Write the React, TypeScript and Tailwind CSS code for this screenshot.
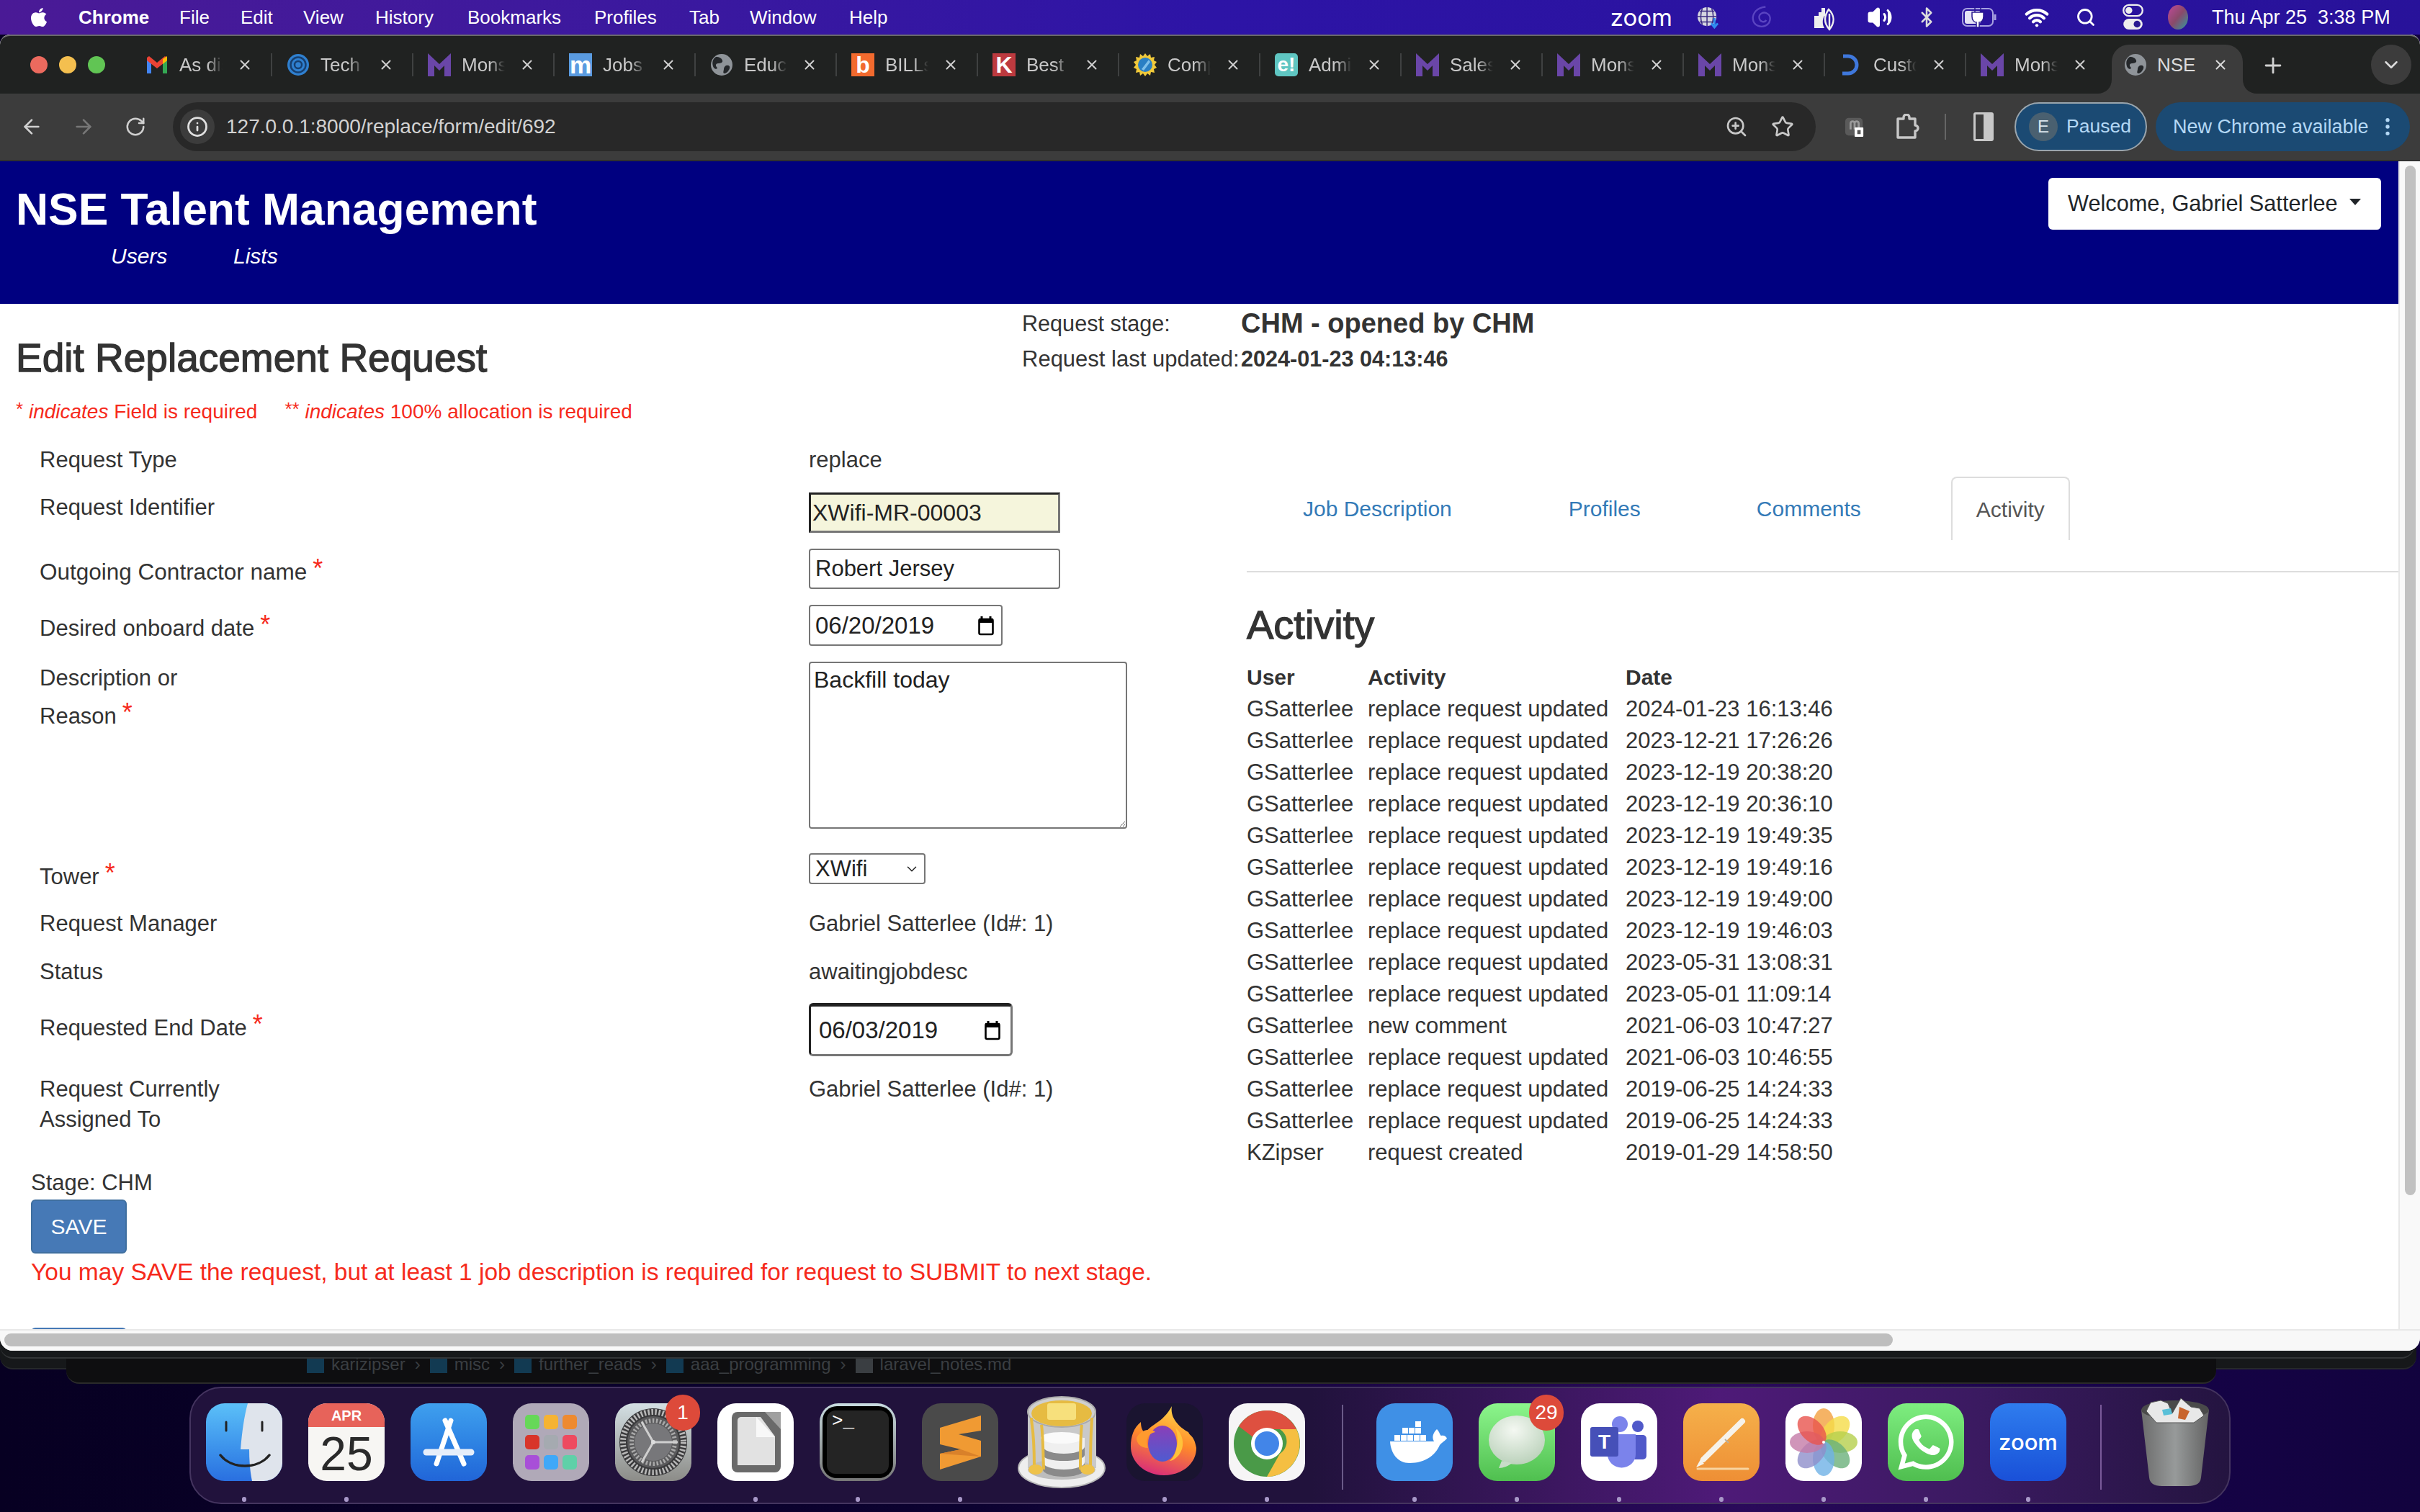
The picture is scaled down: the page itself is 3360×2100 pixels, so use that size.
import type { ReactNode } from 'react'
import { ArrowLeft, ArrowRight, Bluetooth, ChevronDown, Info, MoreVertical, Plus, RotateCw, Search, Star, Volume2, Wifi, X, ZoomIn } from 'lucide-react'
import { FaApple, FaWhatsapp } from 'react-icons/fa'

const MENU = [
  ['File', 'w-[85px]'],
  ['Edit', 'w-[87px]'],
  ['View', 'w-[100px]'],
  ['History', 'w-[128px]'],
  ['Bookmarks', 'w-[176px]'],
  ['Profiles', 'w-[132px]'],
  ['Tab', 'w-[84px]'],
  ['Window', 'w-[138px]'],
  ['Help', 'w-[80px]'],
]

function MonsterM() {
  return (
    <svg viewBox="0 0 32 32" className="h-8 w-8">
      <path d="M0 32V0l16 15L32 0v32h-9V17l-7 7-7-7v15z" fill="#6a46a8" />
    </svg>
  )
}

function GlobeIcon() {
  return (
    <svg viewBox="0 0 32 32" className="h-8 w-8">
      <circle cx="16" cy="16" r="15" fill="#8f9499" />
      <path d="M8 5c5 0 8 2 9 5s-3 4-6 4-4 3-2 5 0 4-3 2S1 9 8 5zM22 17c4-1 6 1 5 4s-4 7-7 7-1-4-1-6 1-4 3-5z" fill="#24272a" />
    </svg>
  )
}

const FAVICONS: Record<string, ReactNode> = {
  gmail: (
    <svg viewBox="0 0 32 32" className="h-8 w-8">
      <path d="M2 8v20h6V14z" fill="#4285f4" />
      <path d="M30 8v20h-6V14z" fill="#34a853" />
      <path d="M2 10V6l3-2 11 9 11-9 3 2v4l-14 11z" fill="#ea4335" />
      <path d="M24 8l6-4v6l-6 5z" fill="#fbbc04" />
    </svg>
  ),
  tech: (
    <svg viewBox="0 0 32 32" className="h-8 w-8">
      <circle cx="16" cy="16" r="15" fill="#2f80d0" />
      <circle cx="16" cy="16" r="10.5" fill="none" stroke="#163f70" strokeWidth="2.5" />
      <circle cx="16" cy="16" r="5" fill="none" stroke="#163f70" strokeWidth="2.5" />
    </svg>
  ),
  monster: <MonsterM />,
  jobs: (
    <div className="flex h-8 w-8 items-center justify-center bg-[#5a9be0] text-[34px] leading-none font-bold text-white">m</div>
  ),
  bill: (
    <div className="flex h-8 w-8 items-center justify-center bg-[#f26a2e] text-[32px] leading-none font-bold text-white">b</div>
  ),
  best: (
    <div className="flex h-8 w-8 items-center justify-center bg-[#bd3a3f] text-[32px] leading-none font-bold text-white">K</div>
  ),
  compass: (
    <svg viewBox="0 0 32 32" className="h-8 w-8">
      <path d="M16 0l3 4 4-3 1 5 5-1-1 5 4 2-3 4 3 4-4 2 1 5-5-1-1 5-4-3-3 4-3-4-4 3-1-5-5 1 1-5-4-2 3-4-3-4 4-2-1-5 5 1 1-5 4 3z" fill="#f0c93a" />
      <circle cx="16" cy="16" r="10" fill="#2a7fc4" />
      <path d="M11 22L21 9l2 3-9 12z" fill="#7fc0ea" />
    </svg>
  ),
  admin: (
    <div className="flex h-8 w-8 items-center justify-center rounded-[5px] bg-[#5fc6c2] text-[28px] leading-none font-bold text-white">e!</div>
  ),
  cust: (
    <svg viewBox="0 0 32 32" className="h-8 w-8">
      <path d="M5 4h7a12 12 0 0 1 0 24H4" fill="none" stroke="#3f78dc" strokeWidth="5" />
    </svg>
  ),
  globe: <GlobeIcon />,
}

const TABS = [
  ['gmail', 'As dis'],
  ['tech', 'Tech'],
  ['monster', 'Mons'],
  ['jobs', 'Jobs'],
  ['globe', 'Educ'],
  ['bill', 'BILLs'],
  ['best', 'Best'],
  ['compass', 'Comp'],
  ['admin', 'Admi'],
  ['monster', 'Sales'],
  ['monster', 'Mons'],
  ['monster', 'Mons'],
  ['cust', 'Custo'],
  ['monster', 'Mons'],
]

function Tab({ icon, title, first }: { icon: string; title: string; first: boolean }) {
  return (
    <div className="flex h-[68px] w-[196px] shrink-0 items-start pt-3">
      <div className={first ? 'h-8 w-[2px]' : 'h-8 w-[2px] bg-[#3f4141]'} />
      <div className="ml-5 h-8 w-8 shrink-0">{FAVICONS[icon]}</div>
      <div className="ml-[15px] w-[60px] text-[26px] leading-8 whitespace-nowrap text-[#c9c9c9] [mask-image:linear-gradient(to_right,black_65%,transparent)]">
        {title}
      </div>
      <X className="mt-[5px] ml-5 shrink-0 text-[#d0d0d0]" size={22} strokeWidth={2.2} />
    </div>
  )
}

function ActiveTab() {
  return (
    <div className="relative ml-2 flex h-[68px] w-[182px] shrink-0 items-start rounded-t-[24px] bg-[#3c3c3c] pt-3 pl-[17px]">
      <svg viewBox="0 0 20 20" className="absolute bottom-0 -left-5 h-5 w-5">
        <path d="M20 0v20H0c12 0 20-8 20-20z" fill="#3c3c3c" />
      </svg>
      <svg viewBox="0 0 20 20" className="absolute -right-5 bottom-0 h-5 w-5">
        <path d="M0 0v20h20C8 20 0 12 0 0z" fill="#3c3c3c" />
      </svg>
      <GlobeIcon />
      <div className="ml-[14px] w-[50px] text-[26px] leading-8 whitespace-nowrap text-[#dcdcdc]">NSE</div>
      <X className="mt-[5px] ml-[27px] shrink-0 text-[#d8d8d8]" size={22} strokeWidth={2.2} />
    </div>
  )
}

function MenuBar() {
  return (
    <div className="flex h-12 shrink-0 items-center bg-gradient-to-r from-[#4a1a96] via-[#2d14a6] to-[#28129a] text-[26px] text-white">
      <FaApple className="ml-[39px]" size={30} />
      <span className="ml-[40px] w-[140px] font-bold">Chrome</span>
      {MENU.map(([name, width]) => (
        <span key={name} className={width}>{name}</span>
      ))}
      <span className="ml-auto font-['Inter',sans-serif] text-[33px] leading-none">zoom</span>
      <svg viewBox="0 0 32 34" className="ml-[34px] h-[34px] w-[30px]">
        <circle cx="15" cy="16" r="14" fill="#d5d5e0" />
        <path d="M1 16h28M15 2v28M4 8h22M4 24h22M8 4c-3 8-3 16 0 24M22 4c3 8 3 16 0 24" stroke="#3a2a80" strokeWidth="1.6" fill="none" />
        <path d="M26 18v12M21 26l5 6 5-6" stroke="#2f8df0" strokeWidth="3" fill="none" />
      </svg>
      <svg viewBox="0 0 32 34" className="ml-[44px] h-[34px] w-[31px] opacity-60">
        <path d="M22 2C10 3 3 11 4 20s11 12 18 9 9-13 3-17-13 0-12 6 8 7 10 3" fill="none" stroke="#7a66d8" strokeWidth="2.4" />
      </svg>
      <svg viewBox="0 0 38 38" className="ml-[50px] h-[38px] w-[38px]">
        <path d="M8 17h6v-5h4V6h5v11h-1c-3 5-3 12 0 17H8z" fill="#eee" />
        <path d="M28 8c8 8 9 18 1 28-7-8-8-18-1-28zM29 14v20" fill="none" stroke="#eee" strokeWidth="2.4" />
      </svg>
      <Volume2 className="ml-[43px] fill-white text-white" size={36} />
      <Bluetooth className="ml-[32px] text-[#ddd]" size={30} />
      <svg viewBox="0 0 50 28" className="ml-[34px] h-[28px] w-[50px]">
        <rect x="1" y="2" width="42" height="24" rx="6" fill="none" stroke="#a8a2e0" strokeWidth="2" />
        <rect x="4" y="5" width="22" height="18" rx="3" fill="#e4e2f5" />
        <path d="M46 10v8" stroke="#a8a2e0" strokeWidth="3" />
        <path d="M18 0v7M26 0v7M14 7h16v6c0 5-3 8-6 8v7h-4v-7c-3 0-6-3-6-8z" stroke="#2a1a90" strokeWidth="1.5" fill="#fff" />
      </svg>
      <Wifi className="ml-[37px]" size={34} strokeWidth={3} />
      <Search className="ml-[37px]" size={28} strokeWidth={2.4} />
      <svg viewBox="0 0 30 40" className="ml-[37px] h-[38px] w-[29px]">
        <rect x="1" y="2" width="28" height="16" rx="8" fill="none" stroke="#eee" strokeWidth="2.5" />
        <circle cx="9" cy="10" r="5" fill="#eee" />
        <rect x="1" y="22" width="28" height="16" rx="8" fill="#eee" />
        <circle cx="21" cy="30" r="5" fill="#2a1a90" />
      </svg>
      <svg viewBox="0 0 28 36" className="ml-[34px] h-[36px] w-[28px]">
        <defs>
          <linearGradient id="siri" x1="0" x2="1" y1="0" y2="1">
            <stop offset="0" stopColor="#c04a9a" />
            <stop offset="0.5" stopColor="#8a4a6a" />
            <stop offset="1" stopColor="#2f9aa0" />
          </linearGradient>
        </defs>
        <ellipse cx="14" cy="18" rx="14" ry="17" fill="url(#siri)" />
      </svg>
      <span className="mr-[38px] ml-[33px] w-[251px] text-[27px] whitespace-nowrap">Thu Apr 25&nbsp;&nbsp;3:38 PM</span>
    </div>
  )
}

function TabStrip() {
  return (
    <div className="flex h-[82px] shrink-0 items-end rounded-t-[14px] border-t-2 border-[#6a6a6a] bg-[#202221]">
      <div className="flex h-[68px] w-[180px] shrink-0 items-start gap-4 pt-4 pl-[42px]">
        <span className="h-6 w-6 rounded-full bg-[#ec6a5e]" />
        <span className="h-6 w-6 rounded-full bg-[#f4bf4f]" />
        <span className="h-6 w-6 rounded-full bg-[#61c554]" />
      </div>
      {TABS.map(([icon, title], i) => (
        <Tab key={i} icon={icon} title={title} first={i === 0} />
      ))}
      <ActiveTab />
      <div className="flex h-[68px] items-start pt-[12px] pl-[25px]">
        <Plus className="text-[#d0d0d0]" size={34} />
      </div>
      <div className="mr-3 mb-3 ml-auto flex h-14 w-14 items-center justify-center rounded-full bg-[#3c3c3c]">
        <ChevronDown className="text-[#dcdcdc]" size={30} />
      </div>
    </div>
  )
}

function Toolbar() {
  return (
    <div className="flex h-[94px] shrink-0 items-center border-b-2 border-[#303030] bg-[#3c3c3c]">
      <ArrowLeft className="ml-[28px] text-[#d0d0d0]" size={32} />
      <ArrowRight className="ml-[40px] text-[#777]" size={32} />
      <RotateCw className="ml-[41px] text-[#d0d0d0]" size={30} />
      <div className="ml-[37px] flex h-[68px] w-[2281px] items-center rounded-full bg-[#282828] pl-[10px]">
        <div className="flex h-12 w-12 items-center justify-center rounded-full bg-[#3c3c3c]">
          <Info className="text-[#e0e0e0]" size={30} strokeWidth={2.2} />
        </div>
        <span className="ml-4 text-[28px] text-[#d2d2d2]">127.0.0.1:8000/replace/form/edit/692</span>
        <ZoomIn className="ml-auto text-[#c8c8c8]" size={32} />
        <Star className="mr-[30px] ml-[32px] text-[#c8c8c8]" size={32} />
      </div>
      <svg viewBox="0 0 30 32" className="ml-[40px] h-8 w-[28px]">
        <rect x="1" y="3" width="26" height="26" rx="5" fill="#5a5a5a" />
        <path d="M9 20V11a3 3 0 0 1 6 0v9M15 20V11a3 3 0 0 1 6 0v9" stroke="#999" strokeWidth="3" fill="none" />
        <rect x="15" y="17" width="13" height="14" rx="1" fill="#fff" />
        <rect x="19" y="21" width="5" height="6" fill="#555" />
      </svg>
      <svg viewBox="0 0 34 36" className="ml-[42px] h-9 w-[34px]">
        <path d="M4 7h8V5a4 4 0 0 1 8 0v2h8v9a4 4 0 0 1 0 8v9H4z" fill="none" stroke="#c8c8c8" strokeWidth="3.4" strokeLinejoin="round" />
      </svg>
      <div className="ml-[35px] h-9 w-[2px] bg-[#666]" />
      <div className="ml-[38px] flex h-10 w-[28px] justify-end rounded-[3px] border-[3px] border-[#c8c8c8]">
        <div className="h-full w-[11px] bg-[#c8c8c8]" />
      </div>
      <div className="ml-[29px] flex h-[68px] w-[184px] items-center rounded-full border-2 border-[#9aa5ad] bg-[#1b4a73] pl-[18px]">
        <div className="flex h-10 w-10 items-center justify-center rounded-full bg-[#4a6070] text-[24px] text-[#dbe6ee]">E</div>
        <span className="ml-[12px] text-[26.5px] text-[#b4d8f5]">Paused</span>
      </div>
      <div className="ml-[12px] flex h-[68px] w-[353px] items-center rounded-full bg-[#1b4a73] pl-6">
        <span className="text-[27px] whitespace-nowrap text-[#b4d8f5]">New Chrome available</span>
        <MoreVertical className="mr-[15px] ml-auto text-[#b4d8f5]" size={32} />
      </div>
    </div>
  )
}

function Req() {
  return <span className="ml-[8px] align-[3px] text-[36px] leading-none text-[#f62a1c]">*</span>
}

function CalendarIcon() {
  return (
    <svg viewBox="0 0 24 28" className="h-7 w-6">
      <path d="M6 1v4M18 1v4" stroke="#000" strokeWidth="3" />
      <rect x="2.5" y="5" width="19" height="21" rx="2" fill="none" stroke="#000" strokeWidth="2.6" />
      <rect x="2" y="4" width="20" height="6" fill="#000" />
    </svg>
  )
}

function Row({ className, label, labelClass, children }: { className: string; label: ReactNode; labelClass: string; children: ReactNode }) {
  return (
    <div className={`grid grid-cols-[1068px_auto] ${className}`}>
      <div className={labelClass}>{label}</div>
      <div>{children}</div>
    </div>
  )
}

function FormSection() {
  return (
    <div className="w-[1731px] shrink-0 text-[31px] leading-[42px] text-[#333]">
      <div className="pl-[55px]">
        <Row className="h-[66px]" labelClass="" label="Request Type">replace</Row>
        <Row className="h-[78px]" labelClass="" label="Request Identifier">
          <input
            readOnly
            value="XWifi-MR-00003"
            className="h-[56px] w-[349px] border-[3px] border-t-[#222] border-r-[#767676] border-b-[#767676] border-l-[#222] bg-[#f5f5dc] pl-[2px] text-[32px] text-[#222]"
          />
        </Row>
        <Row
          className="h-[78px]"
          labelClass="pt-[10px] text-[31.5px]"
          label={<>Outgoing Contractor name<Req /></>}
        >
          <input
            readOnly
            value="Robert Jersey"
            className="h-[56px] w-[349px] rounded-[4px] border-2 border-[#767676] pl-[7px] text-[31px] text-[#222]"
          />
        </Row>
        <Row className="h-[79px]" labelClass="pt-[10px]" label={<>Desired onboard date<Req /></>}>
          <div className="flex h-[57px] w-[269px] items-center rounded-[4px] border-2 border-[#767676] pr-[9px] pl-[7px] text-[33px] text-[#222]">
            06/20/2019
            <span className="ml-auto"><CalendarIcon /></span>
          </div>
        </Row>
        <Row
          className="h-[266px]"
          labelClass="-mt-1 leading-[53px]"
          label={<>Description or<br />Reason<Req /></>}
        >
          <textarea
            readOnly
            defaultValue="Backfill today"
            className="block h-[232px] w-[442px] rounded-[4px] border-2 border-[#767676] px-[5px] py-[5px] text-[32px] leading-[36px] text-[#222]"
          />
        </Row>
        <Row className="h-[77px]" labelClass="pt-[10px]" label={<>Tower<Req /></>}>
          <div className="flex h-[43px] w-[162px] items-center rounded-[4px] border-2 border-[#767676] pr-[6px] pl-[7px] text-[#222]">
            XWifi
            <ChevronDown className="ml-auto text-[#222]" size={22} strokeWidth={1.6} />
          </div>
        </Row>
        <Row className="h-[67px]" labelClass="" label="Request Manager">Gabriel Satterlee (Id#: 1)</Row>
        <Row className="h-[64px]" labelClass="" label="Status">awaitingjobdesc</Row>
        <Row className="h-[99px]" labelClass="pt-3" label={<>Requested End Date<Req /></>}>
          <div className="flex h-[74px] w-[283px] items-center rounded-[6px] border-[3px] border-t-[5px] border-[#222] border-r-[#767676] border-b-[#767676] pr-[13px] pl-[11px] text-[33px] text-[#222]">
            06/03/2019
            <span className="ml-auto"><CalendarIcon /></span>
          </div>
        </Row>
        <Row className="h-[130px]" labelClass="" label={<>Request Currently<br />Assigned To</>}>Gabriel Satterlee (Id#: 1)</Row>
      </div>
      <div className="pl-[43px]">
        <div>Stage: CHM</div>
        <button className="mt-[2px] block h-[75px] w-[133px] rounded-[6px] border-2 border-[#3f6f9f] bg-[#4679b6] text-[30px] text-white">SAVE</button>
        <p className="mt-1 text-[33.5px] leading-[44px] whitespace-nowrap text-[#f62a1c]">
          You may SAVE the request, but at least 1 job description is required for request to SUBMIT to next stage.
        </p>
        <div className="mt-[55px] h-[75px] w-[133px] rounded-[6px] bg-[#4679b6]" />
      </div>
    </div>
  )
}

const ACTIVITY = [
  ['GSatterlee', 'replace request updated', '2024-01-23 16:13:46'],
  ['GSatterlee', 'replace request updated', '2023-12-21 17:26:26'],
  ['GSatterlee', 'replace request updated', '2023-12-19 20:38:20'],
  ['GSatterlee', 'replace request updated', '2023-12-19 20:36:10'],
  ['GSatterlee', 'replace request updated', '2023-12-19 19:49:35'],
  ['GSatterlee', 'replace request updated', '2023-12-19 19:49:16'],
  ['GSatterlee', 'replace request updated', '2023-12-19 19:49:00'],
  ['GSatterlee', 'replace request updated', '2023-12-19 19:46:03'],
  ['GSatterlee', 'replace request updated', '2023-05-31 13:08:31'],
  ['GSatterlee', 'replace request updated', '2023-05-01 11:09:14'],
  ['GSatterlee', 'new comment', '2021-06-03 10:47:27'],
  ['GSatterlee', 'replace request updated', '2021-06-03 10:46:55'],
  ['GSatterlee', 'replace request updated', '2019-06-25 14:24:33'],
  ['GSatterlee', 'replace request updated', '2019-06-25 14:24:33'],
  ['KZipser', 'request created', '2019-01-29 14:58:50'],
]

function ActivitySection() {
  return (
    <div className="min-w-0 flex-1 text-[30px] text-[#333]">
      <div className="mt-[44px] flex h-[88px] items-center text-[#337ab7]">
        <span className="ml-[78px]">Job Description</span>
        <span className="ml-[162px]">Profiles</span>
        <span className="ml-[161px]">Comments</span>
        <span className="ml-[125px] flex h-[88px] w-[165px] items-center justify-center rounded-t-[8px] border-x-2 border-t-2 border-[#ddd] text-[#555]">
          Activity
        </span>
      </div>
      <div className="mt-[43px] h-[2px] bg-[#ddd]" />
      <h2 className="mt-[41px] text-[56px] leading-[64px] text-[#333] [-webkit-text-stroke:1.3px_#333]">Activity</h2>
      <div className="mt-[19px] grid grid-cols-[168px_358px_auto] text-[31px] leading-[44px]">
        <b className="text-[30px]">User</b>
        <b className="text-[30px]">Activity</b>
        <b className="text-[30px]">Date</b>
        {ACTIVITY.flatMap((row, i) =>
          row.map((cell, j) => <span key={`${i}-${j}`} className="whitespace-nowrap">{cell}</span>),
        )}
      </div>
    </div>
  )
}

function PageContent() {
  return (
    <div className="flex min-h-0 flex-1 flex-col overflow-hidden bg-white">
      <div className="flex h-[198px] shrink-0 items-start justify-between bg-[#000080] pl-[22px] text-white">
        <div className="pt-[32px]">
          <div className="text-[62.4px] leading-[70px] font-bold whitespace-nowrap">NSE Talent Management</div>
          <div className="mt-[10px] flex text-[30px] leading-10 italic">
            <span className="ml-[132px] w-[170px]">Users</span>
            <span>Lists</span>
          </div>
        </div>
        <div className="mt-[23px] mr-6 flex h-[72px] w-[462px] items-center rounded-[6px] bg-white pl-[27px] text-[30.7px] text-[#212529]">
          Welcome, Gabriel Satterlee
          <span className="mb-[6px] ml-[16px] h-0 w-0 border-x-[8px] border-t-[9px] border-x-transparent border-t-[#212529]" />
        </div>
      </div>
      <div className="flex h-[196px] shrink-0">
        <div className="w-[1419px] shrink-0 pl-[22px]">
          <h1 className="pt-[43px] text-[55px] leading-[64px] whitespace-nowrap text-[#333] [-webkit-text-stroke:1.3px_#333]">Edit Replacement Request</h1>
          <p className="mt-[23px] text-[28px] leading-10 whitespace-nowrap text-[#f62a1c]">
            <span className="align-[4px] text-[26px] leading-none">*</span> <i>indicates</i> Field is required
            <span className="ml-[38px] align-[4px] text-[26px] leading-none">**</span> <i>indicates</i> 100% allocation is required
          </p>
        </div>
        <div className="grid h-fit grid-cols-[304px_auto] items-center pt-[3px] text-[30.6px] leading-[49px] text-[#333]">
          <span>Request stage:</span>
          <b className="text-[38px]">CHM - opened by CHM</b>
          <span className="whitespace-nowrap text-[31px]">Request last updated:</span>
          <b>2024-01-23 04:13:46</b>
        </div>
      </div>
      <div className="flex min-h-0 flex-1">
        <FormSection />
        <ActivitySection />
      </div>
    </div>
  )
}

function BrowserWindow() {
  return (
    <div className="relative z-10 flex h-[1828px] shrink-0 flex-col overflow-hidden rounded-t-[14px] rounded-b-[18px] bg-white">
      <TabStrip />
      <Toolbar />
      <div className="flex min-h-0 flex-1">
        <PageContent />
        <div className="flex w-[30px] shrink-0 justify-center border-l-2 border-[#e8e8e8] bg-[#f9f9f9] pt-[6px]">
          <div className="h-[1430px] w-[15px] rounded-full bg-[#c1c1c1]" />
        </div>
      </div>
      <div className="h-[30px] shrink-0 border-t-2 border-[#e8e8e8] bg-[#f8f8f8] pt-1 pl-[6px]">
        <div className="h-[18px] w-[2622px] rounded-full bg-[#bebebe]" />
      </div>
    </div>
  )
}

function Squircle({ className, children }: { className: string; children?: ReactNode }) {
  return <div className={`relative flex h-[108px] w-[106px] items-center justify-center overflow-hidden rounded-[26px] ${className}`}>{children}</div>
}

function Badge({ text }: { text: string }) {
  return (
    <div className="absolute -top-[12px] -right-[12px] z-10 flex h-[50px] w-[48px] items-center justify-center rounded-full bg-[#dd4a3a] text-[28px] text-white">
      {text}
    </div>
  )
}

const DOCK_LEFT: [ReactNode, boolean][] = [
  [
    <Squircle key="finder" className="bg-gradient-to-b from-[#5cc0f8] to-[#2a6fe0]">
      <svg viewBox="0 0 106 108" className="h-full w-full">
        <path d="M58 0h48v108H64c-3-14-4-30-4-44H48C50 40 53 18 58 0z" fill="#dfe4ec" />
        <path d="M28 26v12M78 26v12" stroke="#222" strokeWidth="3" strokeLinecap="round" />
        <path d="M20 72c16 20 52 20 68 0" stroke="#222" strokeWidth="3.5" fill="none" strokeLinecap="round" />
      </svg>
    </Squircle>,
    true,
  ],
  [
    <Squircle key="cal" className="flex-col justify-start bg-[#f7f6f3]">
      <div className="flex h-[33px] w-full shrink-0 items-center justify-center bg-[#e7635a] text-[20px] font-bold text-white">APR</div>
      <div className="text-[66px] leading-[74px] text-[#2a2a2a]">25</div>
    </Squircle>,
    true,
  ],
  [
    <Squircle key="store" className="bg-gradient-to-b from-[#3fa0ee] to-[#2165d8]">
      <svg viewBox="0 0 106 108" className="h-full w-full">
        <path d="M56 24L36 84M48 24l26 60" stroke="#fff" strokeWidth="7" strokeLinecap="round" />
        <path d="M22 68h62" stroke="#e6eefa" strokeWidth="9" strokeLinecap="round" />
      </svg>
    </Squircle>,
    false,
  ],
  [
    <Squircle key="launch" className="bg-[#b0a9b8]">
      <div className="grid grid-cols-3 gap-x-[6px] gap-y-[8px]">
        {['bg-[#66d858]', 'bg-[#f5b333]', 'bg-[#ee8a30]', 'bg-[#d8352a]', 'bg-[#a5aab0]', 'bg-[#ee4a60]', 'bg-[#a84fd8]', 'bg-[#3fa8f8]', 'bg-[#5fd0a8]'].map((c) => (
          <span key={c} className={`h-[20px] w-[20px] rounded-[5px] ${c}`} />
        ))}
      </div>
    </Squircle>,
    false,
  ],
  [
    <div key="settings" className="relative">
      <Squircle className="bg-gradient-to-b from-[#d4e0e4] to-[#8c8c88]">
        <svg viewBox="0 0 106 108" className="h-full w-full">
          <circle cx="53" cy="54" r="47" fill="#3a3a3c" />
          <circle cx="53" cy="54" r="42" fill="none" stroke="#b8b8b8" strokeWidth="8" strokeDasharray="2.5 2.5" />
          <circle cx="53" cy="54" r="36" fill="#5a5a5c" />
          <circle cx="53" cy="54" r="30" fill="none" stroke="#a8a8a8" strokeWidth="6" strokeDasharray="2.5 2.5" />
          <circle cx="53" cy="54" r="26" fill="#77777a" />
          <path d="M53 54L37 26M53 54h34M53 54L37 82" stroke="#cfcfcf" strokeWidth="3" />
          <circle cx="53" cy="54" r="3" fill="#ddd" />
        </svg>
      </Squircle>
      <Badge text="1" />
    </div>,
    false,
  ],
  [
    <Squircle key="files" className="bg-white">
      <svg viewBox="0 0 106 108" className="h-full w-full">
        <rect x="20" y="12" width="68" height="84" rx="8" fill="#6a6a6a" />
        <path d="M66 12h22v24z" fill="#a0a0a0" />
        <path d="M33 19h27l20 27v40H28V24a5 5 0 0 1 5-5z" fill="#e2e2e2" />
        <path d="M54 19v28h26z" fill="#f8f8f8" />
      </svg>
    </Squircle>,
    true,
  ],
  [
    <Squircle key="term" className="bg-gradient-to-b from-[#c8dbe0] to-[#777]">
      <div className="flex h-[100px] w-[98px] rounded-[20px] bg-black p-[6px]">
        <div className="h-full w-full rounded-[12px] bg-[#242424] pt-[2px] pl-[7px] font-['Liberation_Mono',monospace] text-[26px] leading-[26px] text-white">
          &gt;_
        </div>
      </div>
    </Squircle>,
    true,
  ],
  [
    <Squircle key="sublime" className="bg-[#4a4a4a]">
      <svg viewBox="0 0 106 108" className="h-full w-full">
        <polygon points="82,17 25,34 25,57 54,64 25,70 25,92 82,74 82,52 51,43 82,38" fill="#f09a33" />
        <polygon points="25,70 54,64 82,74 82,74" fill="#d9812a" />
      </svg>
    </Squircle>,
    true,
  ],
  [
    <svg key="db" viewBox="-8 -9 122 126" className="-mx-2 -mt-[9px] h-[126px] w-[122px] overflow-visible">
      <ellipse cx="52" cy="90" rx="60" ry="27" fill="#eeeeee" stroke="#b8b8b8" strokeWidth="2" />
      <rect x="5" y="10" width="95" height="80" fill="#c9c9c9" />
      <ellipse cx="52" cy="92" rx="47" ry="14" fill="#bdbdbd" />
      <path d="M26 48h58v44a29 10 0 0 1-58 0z" fill="#8a8a8a" />
      <path d="M26 48h58v12a29 10 0 0 1-58 0z" fill="#efefef" />
      <path d="M26 72a29 8 0 0 0 58 0v10a29 10 0 0 1-58 0z" fill="#f0f0f0" />
      <ellipse cx="52" cy="48" rx="29" ry="8" fill="#fafafa" />
      <ellipse cx="52" cy="12" rx="47" ry="21" fill="#cfcfcf" stroke="#aaa" strokeWidth="2" />
      <ellipse cx="52" cy="14" rx="42" ry="18" fill="#e6bb42" />
      <path d="M10 20c0 10 4 16 4 70M94 20c0 10-2 16-2 70M24 30c2 14 2 30 3 62M80 30c-2 14-2 30-2 62" stroke="#e6bb42" strokeWidth="4" fill="none" />
      <rect x="32" y="0" width="40" height="23" rx="3" fill="#f7e07c" />
      <ellipse cx="16" cy="92" rx="10" ry="7" fill="#eec24a" />
      <ellipse cx="88" cy="92" rx="10" ry="7" fill="#eec24a" />
    </svg>,
    false,
  ],
  [
    <div key="ff" className="h-[108px] w-[106px] rounded-[26px] bg-[#1a1430]">
      <svg viewBox="0 0 106 108" className="h-full w-full">
        <defs>
          <linearGradient id="ffg" x1="0.7" x2="0.4" y1="0" y2="1">
            <stop offset="0" stopColor="#ffd84a" />
            <stop offset="0.5" stopColor="#ff8a2a" />
            <stop offset="1" stopColor="#d92f78" />
          </linearGradient>
          <linearGradient id="ffp" x1="0.5" x2="0.5" y1="0" y2="1">
            <stop offset="0" stopColor="#8a3fb8" />
            <stop offset="1" stopColor="#4f5bd0" />
          </linearGradient>
        </defs>
        <path d="M63 4c-3 16 11 30 23 36 2 6 8 4 11 22 0 23-21 38-45 38C26 100 6 82 6 60c0-14 4-26 14-34 0 8 2 12 6 16 8-14 24-14 37-38z" fill="url(#ffg)" />
        <ellipse cx="50" cy="56" rx="20" ry="25" fill="url(#ffp)" />
        <path d="M14 48c6-12 20-14 26-8-10 2-14 10-10 22-10 0-16-6-16-14z" fill="#ff9a2e" />
        <path d="M68 34c10 8 14 24 6 36-4 6-10 10-14 10 10-8 14-30 8-46z" fill="#ffc23a" />
      </svg>
    </div>,
    true,
  ],
  [
    <Squircle key="chrome" className="bg-[#f6f5f6]">
      <svg viewBox="0 0 106 108" className="h-full w-full">
        <circle cx="53" cy="56" r="46" fill="#4a9a48" />
        <path d="M53 10a46 46 0 0 1 41 26H53a20 20 0 0 0-18 12L14 32a46 46 0 0 1 39-22z" fill="#de5040" />
        <path d="M94 36a46 46 0 0 1-41 66l18-32a20 20 0 0 0 0-34z" fill="#f5bf42" />
        <circle cx="53" cy="56" r="22" fill="#fff" />
        <circle cx="53" cy="56" r="17" fill="#4285e8" />
      </svg>
    </Squircle>,
    true,
  ],
]

const DOCKER_BOXES = [
  [54, 25], [36, 34], [45, 34], [54, 34], [25, 44], [34, 44], [43, 44], [52, 44], [61, 44],
]

const PHOTO_PETALS = [
  ['#f3a03f', 0],
  ['#f5dc48', 45],
  ['#b5cf4c', 90],
  ['#6ab07a', 135],
  ['#6fb2e6', 180],
  ['#8f8ecb', 225],
  ['#c47aa8', 270],
  ['#e8544e', 315],
]

const DOCK_RIGHT: ReactNode[] = [
  <Squircle key="docker" className="bg-[#3f90e6]">
    <svg viewBox="0 0 106 108" className="h-full w-full">
      {DOCKER_BOXES.map(([x, y]) => (
        <rect key={`${x}-${y}`} x={x} y={y} width="8" height="8" fill="#fff" />
      ))}
      <path d="M19 53h61c-4-7 0-13 4-17 4 4 4 8 6 9 4-1 7 1 8 4-4 4-8 6-10 9-6 14-20 25-42 25-16 0-26-13-27-30z" fill="#fff" />
    </svg>
  </Squircle>,
  <div key="msg" className="relative">
    <Squircle className="bg-gradient-to-b from-[#8cf58c] to-[#4fbf4f]">
      <svg viewBox="0 0 106 108" className="h-full w-full">
        <defs>
          <radialGradient id="bubble" cx="0.45" cy="0.3" r="0.8">
            <stop offset="0" stopColor="#f4f8f2" />
            <stop offset="1" stopColor="#b4cdb4" />
          </radialGradient>
        </defs>
        <ellipse cx="53" cy="51" rx="39" ry="34" fill="url(#bubble)" />
        <path d="M32 80l-4 10c6 0 14-3 18-7z" fill="#c8dcc8" />
      </svg>
    </Squircle>
    <Badge text="29" />
  </div>,
  <Squircle key="teams" className="bg-white">
    <svg viewBox="0 0 106 108" className="h-full w-full">
      <circle cx="79" cy="32" r="8" fill="#5059c9" />
      <rect x="70" y="44" width="21" height="34" rx="5" fill="#5059c9" />
      <circle cx="54" cy="29" r="11" fill="#7b83eb" />
      <path d="M37 43h39v28a19 18 0 0 1-39 0z" fill="#7b83eb" />
    </svg>
    <div className="absolute top-[33px] left-[13px] flex h-[41px] w-[39px] items-center justify-center rounded-[3px] bg-[#4650b8] text-[28px] font-bold text-white">T</div>
  </Squircle>,
  <Squircle key="pages" className="bg-gradient-to-b from-[#f5b04a] to-[#ee8f35]">
    <svg viewBox="0 0 106 108" className="h-full w-full">
      <path d="M82 25L28 78" stroke="#f6f2ea" strokeWidth="8" strokeLinecap="round" />
      <path d="M58 50l5 5" stroke="#b8b0a0" strokeWidth="2" />
      <path d="M24 78l-6 11 11-5z" fill="#f6f2ea" />
      <path d="M20 91h70" stroke="#f8d4a0" strokeWidth="3" strokeLinecap="round" />
    </svg>
  </Squircle>,
  <Squircle key="photos" className="bg-white">
    <svg viewBox="0 0 106 108" className="h-full w-full">
      {PHOTO_PETALS.map(([fill, angle]) => (
        <ellipse key={String(angle)} cx="53" cy="31" rx="15" ry="24" fill={String(fill)} opacity="0.8" transform={`rotate(${angle} 53 54)`} />
      ))}
      <circle cx="53" cy="54" r="2" fill="#fff" />
    </svg>
  </Squircle>,
  <Squircle key="wa" className="bg-gradient-to-b from-[#7eee80] to-[#4fbe4f]">
    <FaWhatsapp className="text-white" size={88} />
  </Squircle>,
  <Squircle key="zoom" className="bg-gradient-to-b from-[#2f7cee] to-[#1a50d8]">
    <span className="font-['Inter',sans-serif] text-[31px] font-medium text-white">zoom</span>
  </Squircle>,
]

function DockItem({ children, dot }: { children: ReactNode; dot: boolean }) {
  return (
    <div className="flex w-[106px] shrink-0 flex-col items-center">
      <div className="h-[108px]">{children}</div>
      <span className={dot ? 'mt-[22px] h-[7px] w-[6px] rounded-full bg-[#a898c8]' : 'mt-[22px] h-[7px] w-[6px]'} />
    </div>
  )
}

function Dock() {
  return (
    <div className="relative z-10 ml-[263px] flex h-[163px] w-[2834px] items-start rounded-[44px] border-2 border-[#44345f] bg-[linear-gradient(90deg,#21123c_0%,#21123c_55%,#4e1a78_75%,#3a1a60_88%,#241440_100%)] pt-[21px] pl-[21px]">
      <div className="flex gap-[36px]">
        {DOCK_LEFT.map(([icon, dot], i) => (
          <DockItem key={i} dot={dot}>{icon}</DockItem>
        ))}
      </div>
      <div className="mt-[2px] ml-[51px] h-[118px] w-[2px] bg-[#6a5a88]" />
      <div className="ml-[46px] flex gap-[36px]">
        {DOCK_RIGHT.map((icon, i) => (
          <DockItem key={i} dot>{icon}</DockItem>
        ))}
      </div>
      <div className="mt-[2px] ml-[47px] h-[118px] w-[2px] bg-[#7a5a9a]" />
      <svg viewBox="0 0 96 124" className="mt-[-9px] ml-[54px] h-[124px] w-[96px]">
        <defs>
          <linearGradient id="trash" x1="0" x2="1" y1="0" y2="0">
            <stop offset="0" stopColor="#6c6c6c" />
            <stop offset="0.5" stopColor="#979a9a" />
            <stop offset="1" stopColor="#636363" />
          </linearGradient>
        </defs>
        <path d="M1 18l11 94q1 12 18 12h36q17 0 18-12l11-94z" fill="url(#trash)" />
        <ellipse cx="48" cy="18" rx="47" ry="13" fill="#4a4a4a" />
        <path d="M8 20L14 8l14-3 10 4 6 14 12-21 14 12 12 2 6 10-14 10H22z" fill="#e8e8e8" stroke="#555" strokeWidth="1" />
        <path d="M30 18l12-2 2 8-12 2z" fill="#5ac0d8" />
        <path d="M54 14l14 6-6 12-10-2z" fill="#c8642c" />
      </svg>
    </div>
  )
}

function Crumb({ icon, children, last }: { icon: string; children: string; last?: boolean }) {
  return (
    <span className="flex items-center">
      <span className={`mr-[10px] h-[24px] w-[24px] ${icon}`} />
      <span>{children}</span>
      {!last && <span className="mx-[10px] w-[14px] text-center">›</span>}
    </span>
  )
}

function DesktopBehind() {
  return (
    <>
      <div className="absolute top-[1860px] left-0 h-[42px] w-[3355px] rounded-b-[18px] border-b-2 border-[#26282a] bg-[#16181a]" />
      <div className="absolute top-[1860px] left-[92px] flex h-[62px] w-[2985px] items-end rounded-b-[18px] border-b-2 border-[#2a2a2a] bg-[#0e0e10] pb-[10px] pl-[334px] text-[24px] leading-[30px] text-[#3a3e42]">
        <Crumb icon="bg-[#123a52]">karizipser</Crumb>
        <Crumb icon="bg-[#123a52]">misc</Crumb>
        <Crumb icon="bg-[#123a52]">further_reads</Crumb>
        <Crumb icon="bg-[#123a52]">aaa_programming</Crumb>
        <Crumb icon="bg-[#3a3e42]" last>laravel_notes.md</Crumb>
      </div>
      <div className="absolute top-[1860px] left-0 h-[27px] w-[3352px] rounded-b-[18px] border-b-2 border-[#333537] bg-[#17191b]" />
    </>
  )
}

export default function App() {
  return (
    <div className="relative flex h-[2100px] w-[3360px] flex-col overflow-hidden bg-[linear-gradient(90deg,#070022_0%,#0c0230_40%,#2a0a5a_72%,#160348_88%,#12033e_100%)] font-['Liberation_Sans',Arial,sans-serif]">
      <DesktopBehind />
      <MenuBar />
      <BrowserWindow />
      <div className="pt-[50px]">
        <Dock />
      </div>
    </div>
  )
}
